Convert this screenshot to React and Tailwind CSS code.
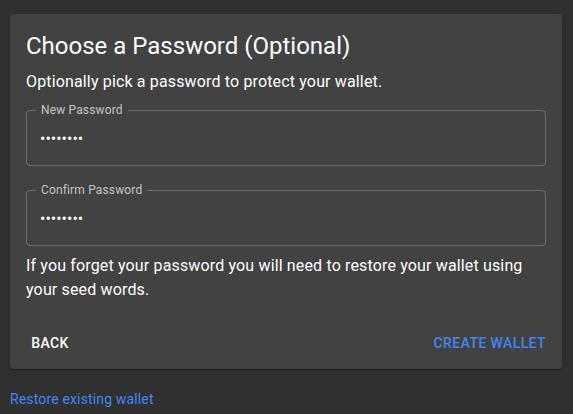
import React, { useState } from 'react';

const font = { fontFamily: 'Roboto, "Liberation Sans", sans-serif' };

const PasswordField = ({ label, value, onChange, className }) => (
    <div className={`relative h-[56px] rounded-[4px] border border-white/[0.23] ${className}`}>
        {/* notched label over the top border */}
        <span className="absolute left-[9px] top-[-7px] bg-[#424242] px-[5px] text-[12px] leading-[12px] tracking-[0.15px] text-white/70">
            {label}
        </span>
        <input
            type="password"
            value={value}
            onChange={onChange}
            className="h-full w-full bg-transparent px-[13px] text-[16px] text-white outline-none"
        />
    </div>
);

export default function App() {
    const [password, setPassword] = useState('abcdefgh');
    const [confirm, setConfirm] = useState('abcdefgh');

    return (
        <div className="min-h-screen bg-[#303030] pl-[10px] pr-[11px] pt-[14px]" style={font}>
            <div className="rounded-[4px] bg-[#424242] shadow-[0_2px_1px_-1px_rgba(0,0,0,0.2),0_1px_1px_0_rgba(0,0,0,0.14),0_1px_3px_0_rgba(0,0,0,0.12)]">
                <div className="px-4 pt-4 pb-[15px] text-white">
                    <h2 className="mb-2 text-[24px] leading-[32px] font-normal">Choose a Password (Optional)</h2>
                    <p className="text-[16px] leading-[24px] tracking-[0.15px]">Optionally pick a password to protect your wallet.</p>

                    <PasswordField
                        label="New Password"
                        value={password}
                        onChange={(e) => setPassword(e.target.value)}
                        className="mt-4"
                    />
                    <PasswordField
                        label="Confirm Password"
                        value={confirm}
                        onChange={(e) => setConfirm(e.target.value)}
                        className="mt-6"
                    />

                    <p className="mt-2 text-[16px] leading-[24px] tracking-[0.15px]">
                        If you forget your password you will need to restore your wallet using your seed words.
                    </p>
                </div>

                <div className="flex items-center justify-between p-2">
                    <button className="h-[36px] min-w-[64px] rounded-[4px] px-2 text-[14px] font-medium uppercase tracking-[0.4px] text-white">
                        Back
                    </button>
                    <button className="h-[36px] min-w-[64px] rounded-[4px] px-2 text-[14px] font-medium uppercase tracking-[0.4px] text-[#4285f4]">
                        Create Wallet
                    </button>
                </div>
            </div>

            <div className="mt-[18px]">
                <a href="#" className="text-[14px] leading-[20px] tracking-[0.15px] text-[#4285f4]">Restore existing wallet</a>
            </div>
        </div>
    );
}
